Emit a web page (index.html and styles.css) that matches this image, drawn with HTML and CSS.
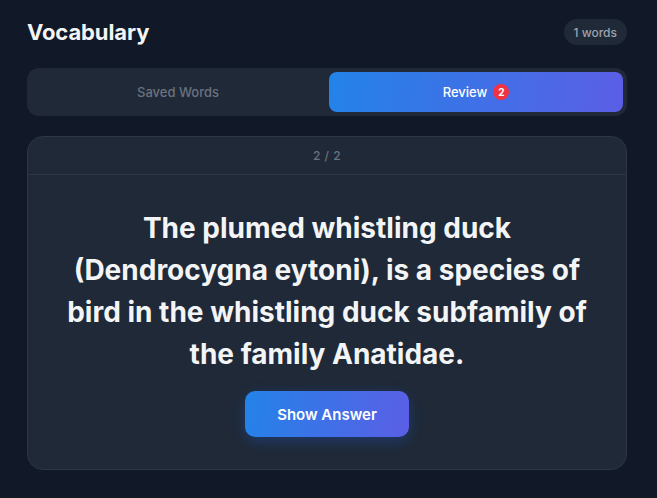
FILE: index.html
```html
<!DOCTYPE html>
<html lang="en">
<head>
<meta charset="utf-8">
<title>Vocabulary</title>
<link rel="stylesheet" href="styles.css">
</head>
<body>
<div class="page">
  <header class="top">
    <h1 class="title">Vocabulary</h1>
    <span class="count">1 words</span>
  </header>
  <nav class="tabs">
    <button class="tab">Saved Words</button>
    <button class="tab active">Review <span class="pill">2</span></button>
  </nav>
  <section class="card">
    <div class="card-head">2 / 2</div>
    <div class="card-body">
      <p class="term">The plumed whistling duck (Dendrocygna eytoni), is a species of bird in the whistling duck subfamily of the family Anatidae.</p>
      <button class="show">Show Answer</button>
    </div>
  </section>
</div>
</body>
</html>
```
FILE: styles.css
```css
* { box-sizing: border-box; }
html, body { margin: 0; }
body {
  background: #111827;
  font-family: Inter, "Noto Sans", sans-serif;
  color: #f3f4f6;
  width: 657px;
  height: 498px;
  overflow: hidden;
}
.page {
  width: 600px;
  margin-left: 27px;
  padding-top: 19px;
}
.top {
  display: flex;
  align-items: center;
  justify-content: space-between;
  height: 26px;
}
.title {
  margin: 0;
  font-size: 22px;
  font-weight: 700;
  color: #f3f4f6;
  letter-spacing: -0.1px;
}
.count {
  height: 26px;
  padding: 0 10px;
  border-radius: 13px;
  background: #1f2937;
  color: #9ca3af;
  font-size: 12px;
  font-weight: 500;
  display: flex;
  align-items: center;
}
.tabs {
  margin-top: 23px;
  display: grid;
  grid-template-columns: 1fr 1fr;
  gap: 4px;
  padding: 4px;
  background: #1f2937;
  border-radius: 12px;
  height: 48px;
}
.tab {
  border: 0;
  background: transparent;
  border-radius: 8px;
  font-family: inherit;
  font-size: 13px;
  font-weight: 500;
  color: #6b7280;
  display: flex;
  align-items: center;
  justify-content: center;
  gap: 6px;
  padding: 0;
}
.tab.active {
  background: linear-gradient(100deg, #2383e8 0%, #5b5ee6 100%);
  color: #ffffff;
}
.pill {
  width: 16px;
  height: 16px;
  border-radius: 50%;
  background: #ef3340;
  color: #fff;
  font-size: 10px;
  font-weight: 700;
  display: inline-flex;
  align-items: center;
  justify-content: center;
}
.card {
  margin-top: 20px;
  background: #1f2937;
  border: 1px solid #2b3646;
  border-radius: 16px;
  height: 334px;
  display: flex;
  flex-direction: column;
}
.card-head {
  height: 39px;
  border-bottom: 1px solid #2b3646;
  display: flex;
  align-items: center;
  justify-content: center;
  font-size: 12px;
  font-weight: 500;
  letter-spacing: 0.5px;
  color: #6b7280;
}
.card-body {
  padding: 32px 32px 32px;
  display: flex;
  flex-direction: column;
  align-items: center;
}
.term {
  margin: 0;
  text-align: center;
  font-size: 28px;
  line-height: 42px;
  font-weight: 700;
  color: #f3f4f6;
}
.show {
  margin-top: 16px;
  height: 46px;
  padding: 0 32px;
  border: 0;
  border-radius: 10px;
  background: linear-gradient(100deg, #2383e8 0%, #5b5ee6 100%);
  color: #fff;
  font-family: inherit;
  font-size: 15px;
  font-weight: 600;
  box-shadow: 0 4px 14px rgba(37, 99, 235, 0.3);
}
```
